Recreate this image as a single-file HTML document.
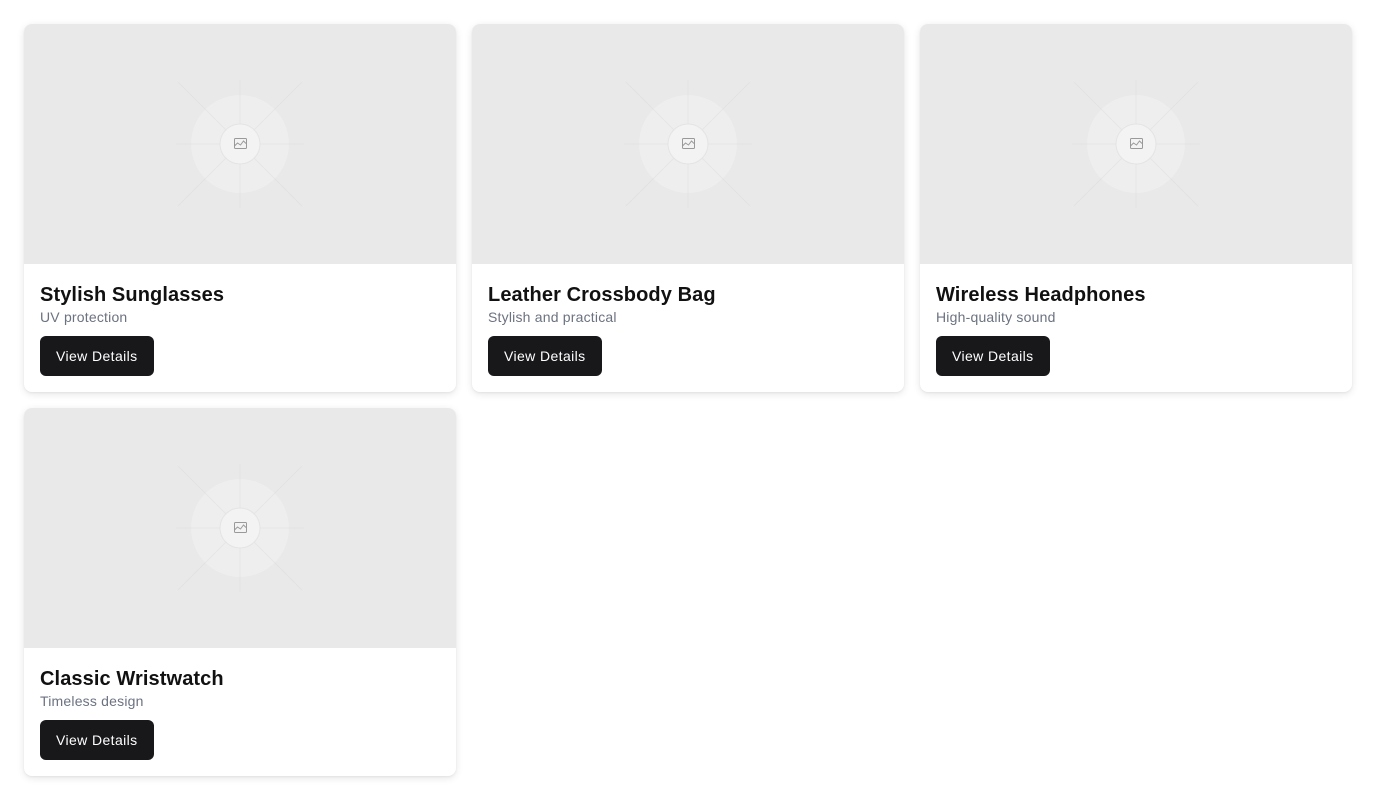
<!DOCTYPE html>
<html><head><style>
body{margin:0;background:#fff;font-family:"Liberation Sans",sans-serif;}
.grid{position:absolute;left:24px;top:24px;display:grid;grid-template-columns:repeat(3,432px);gap:16px;}
.card{width:432px;height:368px;border-radius:8px;background:#fff;box-shadow:0 2px 8px rgba(0,0,0,.10),0 1px 2px rgba(0,0,0,.05);overflow:hidden;}
.img{height:240px;background:#e9e9e9;position:relative;}
.img svg{position:absolute;left:0;top:0;}
.body{padding:19px 16px 0;}
h3{margin:0;font-size:20px;font-weight:bold;color:#111;line-height:24px;letter-spacing:0.1px;}
p{margin:0 0 9px;font-size:14px;color:#6b7280;line-height:20px;letter-spacing:0.2px;}
.btn{display:inline-block;background:#18181b;color:#fff;font-size:14px;height:40px;line-height:40px;padding:0 16px;border-radius:6px;letter-spacing:0.4px;}
</style></head><body>
<div class="grid" id="g"></div>
<script>
var items=[["Stylish Sunglasses","UV protection"],["Leather Crossbody Bag","Stylish and practical"],["Wireless Headphones","High-quality sound"],["Classic Wristwatch","Timeless design"]];
var svg='<svg width="432" height="240"><g stroke="#e2e2e2" stroke-width="1" fill="none"><line x1="216" y1="56" x2="216" y2="184"/><line x1="152" y1="120" x2="280" y2="120"/><line x1="154" y1="58" x2="278" y2="182"/><line x1="278" y1="58" x2="154" y2="182"/></g><circle cx="216" cy="120" r="49" fill="#efefef" fill-opacity=".8"/><g stroke="#e5e5e5"><line x1="216" y1="71" x2="216" y2="169"/><line x1="167" y1="120" x2="265" y2="120"/><line x1="181" y1="85" x2="251" y2="155"/><line x1="251" y1="85" x2="181" y2="155"/></g><circle cx="216" cy="120" r="20" fill="#f3f3f3" stroke="#e4e4e4"/><g stroke="#999" fill="none" stroke-width="1"><rect x="210.5" y="114.5" width="12" height="10" rx="1"/><path d="M210.5 122l3-3 3 2 3-4 2.5 2.5"/></g></svg>';
var h='';items.forEach(function(i){h+='<div class="card"><div class="img">'+svg+'</div><div class="body"><h3>'+i[0]+'</h3><p>'+i[1]+'</p><span class="btn">View Details</span></div></div>';});
document.getElementById('g').innerHTML=h;
</script>
</body></html>
